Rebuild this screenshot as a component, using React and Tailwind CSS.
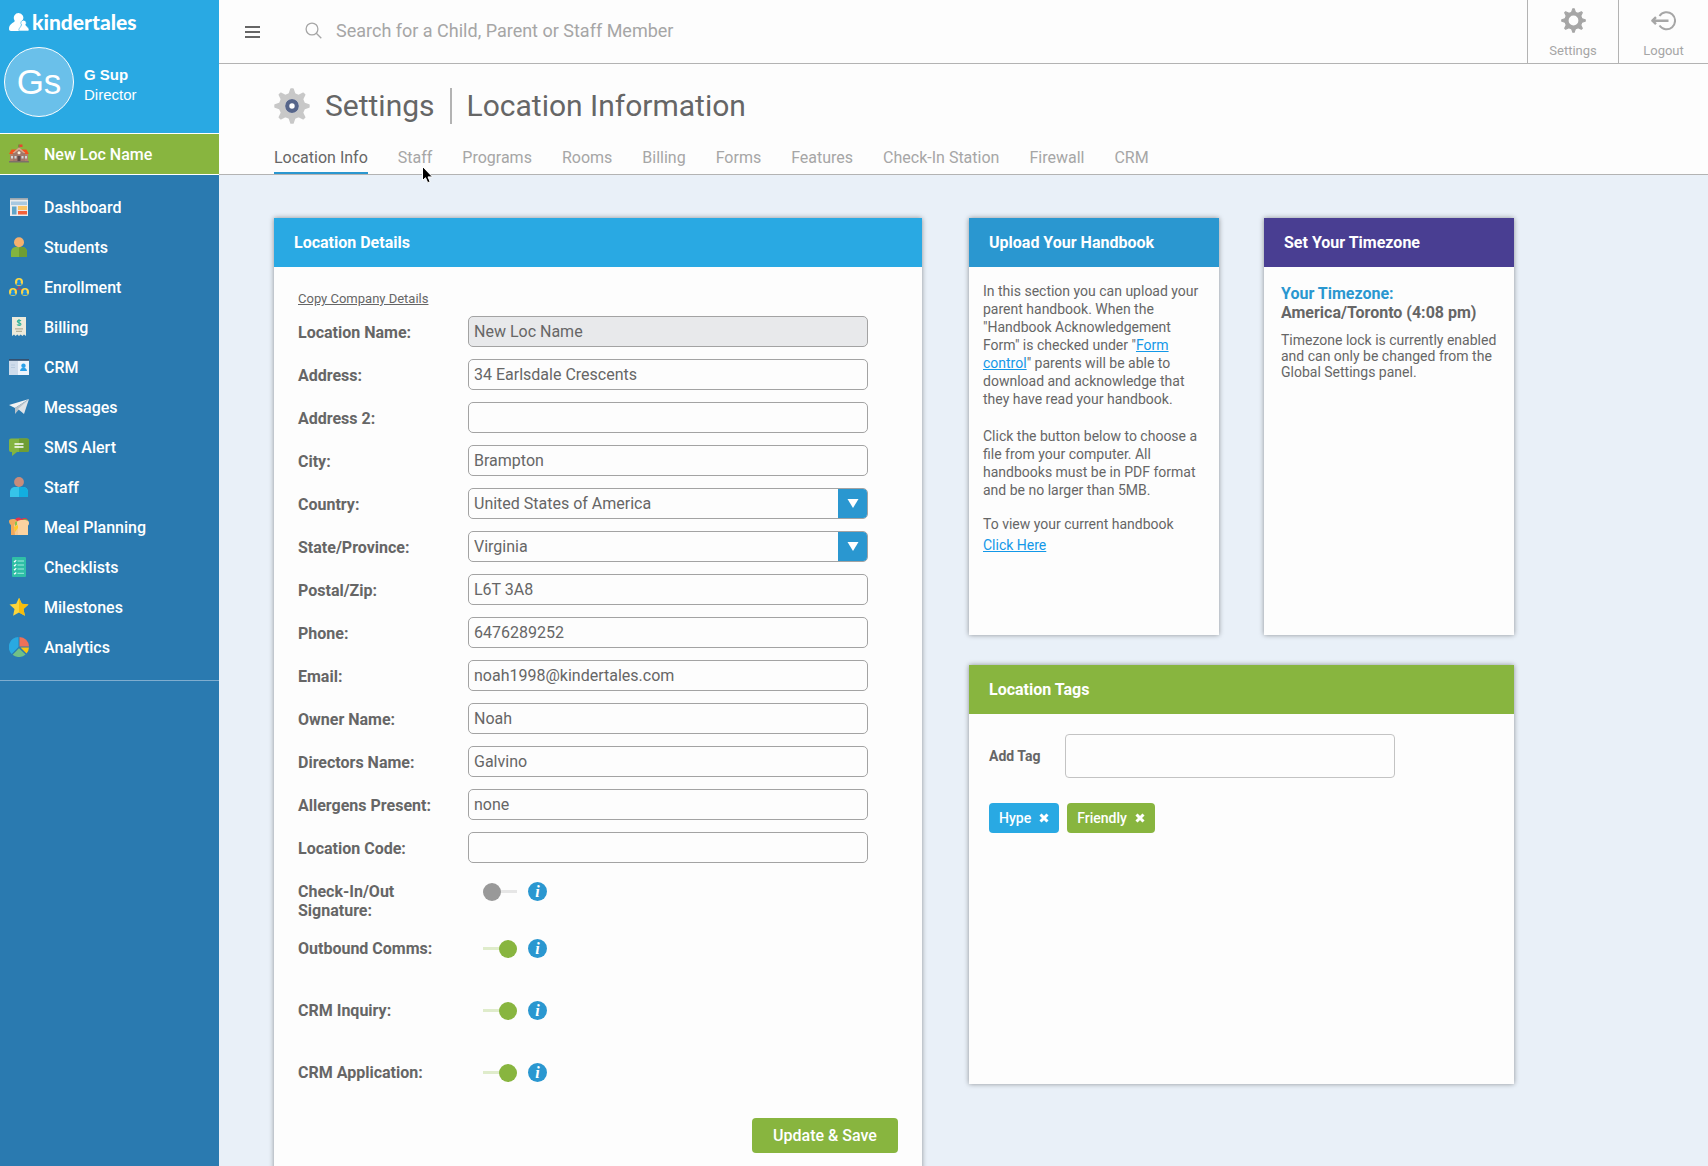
import React, { useState } from 'react'

/* Sidebar icons, all on a 20x20 box */
const ICONS = {
  school: (
    <>
      <path d="M10 6V0.500" stroke="#7a5548" strokeWidth="1"/>
      <path d="M10.500 .5h3v2.500h-3z" fill="#e8452f"/>
      <path d="M1 9h18v8H1z" fill="#b0806c"/>
      <path d="M2.500 5.500h15L20 10H0z" fill="#f4511e"/>
      <path d="M10 3.500 16 9v8H4V9z" fill="#a1786a"/>
      <path d="M10 3.200 16.500 9h-2L10 5.400 5.500 9h-2z" fill="#d9a88c"/>
      <circle cx="10" cy="8.700" r="1.500" fill="#fff3e0"/>
      <path d="M8.500 12h3v5h-3z" fill="#5d4a48"/>
      <path d="M2 12h2v2.500H2zM5.500 12h2v2.500h-2zM12.500 12h2v2.500h-2zM16 12h2v2.500h-2z" fill="#cfd8dc"/>
      <path d="M0 17h20v1.500H0z" fill="#7d7169"/>
    </>
  ),
  dashboard: (
    <>
      <path d="M1 1h18v18H1z" fill="#ececec"/>
      <path d="M1 1h18v1.800H1z" fill="#9aa7b0"/>
      <path d="M2 4.500h16v3.500H2z" fill="#a8c8e0"/>
      <path d="M3 9.500h4.500V17.500H3z" fill="#5fa5c9"/>
      <path d="M9 9h9v4H9z" fill="#fbc566"/>
      <path d="M9 14h9v3.500H9z" fill="#f4623a"/>
    </>
  ),
  students: (
    <>
      <path d="M2 20v-4.500C2 11.500 4.500 10 7 10h6c2.500 0 5 1.500 5 5.500V20z" fill="#83b440"/>
      <path d="M10 10h3c2.500 0 5 1.500 5 5.500V20h-8z" fill="#6f9d33"/>
      <circle cx="10" cy="5.300" r="5" fill="#f5b06e"/>
    </>
  ),
  enrollment: (
    <>
      <path d="M10 8v3.500L5.500 14M10 11.500l4.500 2.500" stroke="#c0405a" strokeWidth="1.200" fill="none"/>
      {[[10, 5], [4, 15], [16, 15]].map(([x, y]) => (
        <g key={x}>
          <circle cx={x} cy={y} r="4" fill="#fdd744"/>
          <circle cx={x} cy={y - 0.8} r="1.700" fill="#1f8ddb"/>
          <path d={`M${x - 2.6} ${y + 3.2}c0-4.500 5.200-4.500 5.200 0z`} fill="#1f8ddb"/>
        </g>
      ))}
    </>
  ),
  billing: (
    <>
      <path d="M3 0h14v19l-2-1.500-1.600 1.500-1.700-1.500L10 19l-1.700-1.500L6.600 19 5 17.500 3 19z" fill="#eceadb"/>
      <path d="M12 4c-.5-.8-3.700-1-3.700.6C8.300 6 12 5.400 12 7.200c0 1.500-3.300 1.500-4 .3M10 2v7" stroke="#2fb39a" strokeWidth="1.100" fill="none"/>
      <path d="M6 11.800h8M7 14.300h6" stroke="#b5b39b" strokeWidth="1.300"/>
    </>
  ),
  crm: (
    <>
      <path d="M0 2h20v16H0z" fill="#cfdceb"/>
      <path d="M9 4h11v14H9z" fill="#eef4fb"/>
      <path d="M0 2h20v1.800H0z" fill="#34506f"/>
      <path d="M2 8h4M2 10.500h4" stroke="#b7cade" strokeWidth="1"/>
      <circle cx="14.500" cy="8.700" r="2.200" fill="#2aa0e8"/>
      <path d="M11 14c0-4.500 7-4.500 7 0z" fill="#2aa0e8"/>
    </>
  ),
  messages: (
    <>
      <path d="M0 8 20 2 6 11z" fill="#f2f2f2"/>
      <path d="M20 2 6 11v6l3-3.500z" fill="#b9c2c9"/>
      <path d="M20 2 9 12l6 5z" fill="#dfe4e8"/>
    </>
  ),
  sms: (
    <>
      <path d="M2 1.500h16a2 2 0 0 1 2 2V13a2 2 0 0 1-2 2H8l-5 4v-4H2a2 2 0 0 1-2-2V3.500a2 2 0 0 1 2-2z" fill="#83b440"/>
      <path d="M10 1.500h8a2 2 0 0 1 2 2V13a2 2 0 0 1-2 2h-8z" fill="#6f9d33"/>
      <path d="M5.500 7h9M5.500 10h9" stroke="#fff" strokeWidth="1.400"/>
    </>
  ),
  staff: (
    <>
      <path d="M1 20v-4.500C1 11.500 3.500 10 6 10h8c2.500 0 5 1.500 5 5.500V20z" fill="#36c4ea"/>
      <path d="M10 10h4c2.500 0 5 1.500 5 5.500V20h-9z" fill="#12aee0"/>
      <circle cx="10" cy="5" r="4.900" fill="#c98c7b"/>
    </>
  ),
  meal: (
    <>
      <path d="M6 3c1-3 5-3 6-1 3-2 7-1 7 2L8 17z" fill="#e5354b"/>
      <path d="M14 2.500c3-1 5 0 5 2l-6 1z" fill="#6fb344"/>
      <path d="M0 4c0-2.500 7-3 8 0v14H2V8C1 7.500 0 6 0 4z" fill="#f0a95e"/>
      <path d="M5 8l4-4v14H6z" fill="#f7c98f"/>
      <path d="M6 5l3-1v3l-3 2z" fill="#8bc34a"/>
      <path d="M5 10l4-2v3l-3 4z" fill="#ffca28"/>
      <path d="M8 6c0-3 3-3 6-3s6 0 6 3c0 1.500-.5 2.300-1 2.500V18H9V8.500C8.300 8 8 7 8 6z" fill="#fbd3a0"/>
    </>
  ),
  checklists: (
    <>
      <rect x="3" y="0" width="14" height="20" rx="1" fill="#2fbfa6"/>
      <path d="M8.500 4H15M8.500 8H15M8.500 12H15M8.500 16.300H15" stroke="#a5ebde" strokeWidth="1"/>
      <path d="M5 4l.8.8L7.200 3M5 8l.8.8L7.200 7M5 12l.8.8L7.200 11M5 16.300l.8.700L7.200 15.500" stroke="#fff" strokeWidth="1.100" fill="none"/>
    </>
  ),
  milestones: (
    <>
      <path d="m10 .8 2.800 6 6.700.8-5 4.500 1.400 6.700L10 15.500l-5.900 3.300 1.400-6.700-5-4.500 6.700-.8z" fill="#fcd53b"/>
      <path d="m10 .8 2.800 6 6.700.8-5 4.500 1.400 6.700L10 15.500z" fill="#f8bd0b"/>
    </>
  ),
  analytics: (
    <>
      <path d="M9.500 10V0A10 10 0 0 0 2.700 17z" fill="#29a9e1"/>
      <path d="M10.500 9.500V0A9.700 9.700 0 0 1 20 9.500z" fill="#ef7058"/>
      <path d="M11.500 10.500H20a10 10 0 0 1-2.500 6z" fill="#fcc60e"/>
      <path d="m10 11.200 6.600 6.300a10 10 0 0 1-13 .3z" fill="#71c186"/>
    </>
  ),
}

const NAV = [
  { label: 'Dashboard', icon: 'dashboard' },
  { label: 'Students', icon: 'students' },
  { label: 'Enrollment', icon: 'enrollment' },
  { label: 'Billing', icon: 'billing' },
  { label: 'CRM', icon: 'crm' },
  { label: 'Messages', icon: 'messages' },
  { label: 'SMS Alert', icon: 'sms' },
  { label: 'Staff', icon: 'staff' },
  { label: 'Meal Planning', icon: 'meal' },
  { label: 'Checklists', icon: 'checklists' },
  { label: 'Milestones', icon: 'milestones' },
  { label: 'Analytics', icon: 'analytics' },
]

const TABS = ['Location Info', 'Staff', 'Programs', 'Rooms', 'Billing', 'Forms', 'Features', 'Check-In Station', 'Firewall', 'CRM']

const FIELDS = [
  { id: 'name', label: 'Location Name:', value: 'New Loc Name', locked: true },
  { id: 'address', label: 'Address:', value: '34 Earlsdale Crescents' },
  { id: 'address2', label: 'Address 2:', value: '' },
  { id: 'city', label: 'City:', value: 'Brampton' },
  { id: 'country', label: 'Country:', value: 'United States of America', select: true },
  { id: 'state', label: 'State/Province:', value: 'Virginia', select: true },
  { id: 'postal', label: 'Postal/Zip:', value: 'L6T 3A8' },
  { id: 'phone', label: 'Phone:', value: '6476289252' },
  { id: 'email', label: 'Email:', value: 'noah1998@kindertales.com' },
  { id: 'owner', label: 'Owner Name:', value: 'Noah' },
  { id: 'director', label: 'Directors Name:', value: 'Galvino' },
  { id: 'allergens', label: 'Allergens Present:', value: 'none' },
  { id: 'code', label: 'Location Code:', value: '' },
]

const TOGGLES = [
  { id: 'signature', label: 'Check-In/Out Signature:', on: false },
  { id: 'comms', label: 'Outbound Comms:', on: true },
  { id: 'inquiry', label: 'CRM Inquiry:', on: true },
  { id: 'application', label: 'CRM Application:', on: true },
]

const TEETH = [0, 45, 90, 135, 180, 225, 270, 315]

function Gear({ color, hub, className }) {
  return (
    <svg viewBox="0 0 24 24" className={className} aria-hidden="true">
      <g fill={color} stroke={color} strokeLinejoin="round">
        {TEETH.map(a => <path key={a} d="M10 4.500 11.300.7h1.400L14 4.500z" transform={`rotate(${a} 12 12)`}/>)}
      </g>
      <circle cx="12" cy="12" r="6.700" fill="none" stroke={color} strokeWidth="4"/>
      {hub && <circle cx="12" cy="12" r="3.200" fill="#fff" stroke="#56658a" strokeWidth="2.800"/>}
    </svg>
  )
}

function NavIcon({ name }) {
  return <svg viewBox="0 0 20 20" className="w-5 h-5 shrink-0" aria-hidden="true">{ICONS[name]}</svg>
}

function Card({ title, color, className = '', children }) {
  return (
    <section className={`bg-[#fdfdfd] shadow-[0_0_5px_rgba(0,0,0,0.4)] ${className}`}>
      <h2 className={`h-[49px] px-5 flex items-center text-base font-bold text-white ${color}`}>{title}</h2>
      {children}
    </section>
  )
}

function Field({ id, label, value, locked, select }) {
  const box = 'w-full h-[31px] px-[5px] rounded-[5px] border border-[#a3a3a3] text-base text-[#666]'
  return (
    <div className="flex items-center">
      <label htmlFor={id} className="w-[170px] shrink-0 pt-0.5 font-bold">{label}</label>
      <div className="w-[400px] relative">
        {select ? (
          <>
            <select id={id} defaultValue={value} className={`${box} appearance-none bg-[#fdfdfd]`}>
              <option>{value}</option>
            </select>
            <span className="absolute right-px inset-y-px w-[29px] rounded-r bg-[#2a97d0] flex items-center justify-center pointer-events-none">
              <svg viewBox="0 0 12 10" className="w-3 h-2.5"><path d="M.5 0h11L6 9z" fill="#fff"/></svg>
            </span>
          </>
        ) : (
          <input id={id} type="text" defaultValue={value} readOnly={locked}
            className={`${box} ${locked ? 'bg-[#e8e9eb]' : 'bg-[#fdfdfd]'}`}/>
        )}
      </div>
    </div>
  )
}

function Toggle({ id, label, on }) {
  const [checked, setChecked] = useState(on)
  return (
    <div className="flex items-start min-h-[43px] first:min-h-0">
      <label htmlFor={id} className="w-[150px] mr-[35px] shrink-0 font-bold leading-[19px]">{label}</label>
      <span className="relative w-[34px] h-[19px] flex items-center">
        <span className={`w-full h-[3px] ${checked ? 'bg-[#dfeccb]' : 'bg-[#e6e6e6]'}`}/>
        <span className={`absolute top-px w-[18px] h-[18px] rounded-full ${checked ? 'right-0 bg-[#88b53f]' : 'left-0 bg-[#999]'}`}/>
        <input id={id} type="checkbox" checked={checked} onChange={e => setChecked(e.target.checked)}
          className="absolute inset-0 w-full h-full opacity-0 cursor-pointer"/>
      </span>
      <button type="button" title="More info"
        className="ml-[11px] w-[19px] h-[19px] rounded-full bg-[#2a97d0] text-white font-['Liberation_Serif',serif] italic font-bold text-base leading-[18px]">i</button>
    </div>
  )
}

function Tag({ label, color }) {
  return (
    <span className={`flex items-center gap-2 h-[30px] px-2.5 rounded ${color}`}>
      {label}
      <button title={`Remove ${label}`}>
        <svg viewBox="0 0 10 10" className="w-2.5 h-2.5"><path d="m1.500 1.500 7 7M8.500 1.500l-7 7" stroke="#fff" strokeWidth="3"/></svg>
      </button>
    </span>
  )
}

export default function App() {
  return (
    <div className="flex h-screen overflow-hidden bg-[#e9f0f8] font-[Roboto,sans-serif] text-base text-[#666]">

      {/* Sidebar */}
      <aside className="w-[219px] shrink-0 bg-[#2a7ab0] text-white">
        <div className="h-[133px] bg-[#29a9e3] pt-2.5">
          <a href="#" className="flex items-center h-6 pl-[9px]">
            <svg viewBox="0 0 20 18" className="w-5 h-[18px]" fill="#fff" aria-hidden="true">
              <path d="M9.500 0a4.800 4.800 0 0 1 4 7.500L12 12v6H2c-1.300 0-2-.7-2-2 0-4.500 3-5.500 5-7 1-.8.700-1.500.2-2.300A4.800 4.800 0 0 1 9.500 0z"/>
              <path d="M14.500 7.200a2.800 2.800 0 0 1 2.200 4.500c.5 2 3.300 2.300 3.300 5 0 .9-.4 1.300-1.200 1.300h-7.900c-.8 0-1.200-.5-1-1.400.4-2 2.200-2.600 2.500-4.900a2.800 2.800 0 0 1 2.100-4.500z" stroke="#29a9e3" strokeWidth=".6"/>
            </svg>
            <span className="ml-[3px] font-[Lato,sans-serif] font-black text-[21px] leading-6">kindertales</span>
          </a>
          <div className="flex items-center pl-1 mt-[13px] font-['Liberation_Sans',sans-serif]">
            <div className="w-[70px] h-[70px] rounded-full border border-white bg-[#6ac0ea] flex items-center justify-center text-[35px]">Gs</div>
            <div className="ml-2.5 pt-1.5 text-[15px] leading-5">
              <div className="font-bold">G Sup</div>
              <div>Director</div>
            </div>
          </div>
        </div>
        <a href="#" className="flex items-center gap-[15px] h-[42px] pl-[9px] border-y border-white bg-[#88b53f] font-medium">
          <NavIcon name="school"/><span className="pt-0.5">New Loc Name</span>
        </a>
        <nav className="pt-3 pb-[13px] border-b border-[#7fadcf]">
          {NAV.map(({ label, icon }) => (
            <a key={label} href="#" className="flex items-center gap-[15px] h-10 pl-[9px] font-medium">
              <NavIcon name={icon}/><span className="pt-0.5">{label}</span>
            </a>
          ))}
        </nav>
      </aside>

      <div className="flex-1 min-w-0 flex flex-col">
        {/* Top bar */}
        <header className="flex items-stretch h-16 shrink-0 bg-[#fdfdfd] border-b border-[#b3b3b3]">
          <button title="Menu" className="pl-[26px] flex items-center">
            <svg viewBox="0 0 15 12" className="w-[15px] h-3"><path d="M0 1h15M0 6h15M0 11h15" stroke="#666" strokeWidth="2"/></svg>
          </button>
          <label htmlFor="search" className="ml-[45px] mr-[14px] pb-0.5 flex items-center">
            <svg viewBox="0 0 17 17" className="w-[17px] h-[17px]" fill="none" stroke="#a6a6a6" strokeWidth="1.300" aria-label="Search">
              <circle cx="7" cy="7" r="5.900"/><path d="m11.300 11.300 5 5"/>
            </svg>
          </label>
          <input id="search" type="text" placeholder="Search for a Child, Parent or Staff Member"
            className="flex-1 pb-0.5 bg-transparent text-lg outline-none placeholder:text-[#a6a6a6]"/>
          <button className="w-[91px] border-l border-[#b3b3b3] flex flex-col items-center pt-2 text-[13px] leading-5 text-[#a6a6a6]">
            <Gear color="#a6a6a6" className="w-[25px] h-[25px] mb-2"/>
            Settings
          </button>
          <button className="w-[90px] border-l border-[#b3b3b3] flex flex-col items-center pt-2 text-[13px] leading-5 text-[#a6a6a6]">
            <svg viewBox="0 0 25 25" className="w-[25px] h-[25px] mb-2" fill="none" stroke="#a6a6a6" strokeWidth="2" strokeLinejoin="round">
              <path d="M8.500 8a8.500 8.500 0 1 1 0 9.500"/>
              <path d="M1.500 12.700H17.500M5 9.200l-3.600 3.500L5 16.200" strokeWidth="2.400"/>
            </svg>
            Logout
          </button>
        </header>

        {/* Page title and tabs */}
        <div className="shrink-0 pl-[55px] bg-[#fdfdfd] border-b border-[#b3b3b3]">
          <div className="flex items-center pt-6">
            <Gear color="#c8c8c8" hub className="w-9 h-9"/>
            <h1 className="flex items-center ml-[15px] text-3xl leading-9">
              <span className="pr-[15px] border-r-2 border-[#b3b3b3]">Settings</span>
              <span className="pl-[15px]">Location Information</span>
            </h1>
          </div>
          <nav className="flex gap-[30px] mt-[21px]">
            {TABS.map((tab, i) => (
              <a key={tab} href="#" className={`relative h-[29px] pt-px border-b-2 ${i === 0 ? 'border-[#2a97d0]' : 'border-transparent text-[#a6a6a6]'}`}>
                {tab}
                {tab === 'Staff' && (
                  <svg viewBox="0 0 12 18" className="absolute left-6 top-5 w-3 h-[18px] z-10" aria-hidden="true">
                    <path d="M.5 1.500v14l3-2.800 2.200 5 2.400-1-2.100-4.800h4.500z" fill="#000" stroke="#fff" strokeWidth="1"/>
                  </svg>
                )}
              </a>
            ))}
          </nav>
        </div>

        {/* Page content */}
        <main className="flex-1 overflow-y-auto [scrollbar-width:none] pl-[55px] pt-[43px] pb-10">
          <div className="max-w-[1240px] grid grid-cols-[648fr_545fr] gap-[47px] items-start">

            <Card title="Location Details" color="bg-[#29a9e3]">
              <form className="px-6 pt-[22px] pb-10" onSubmit={e => e.preventDefault()}>
                <a href="#" className="block w-fit mb-[7px] text-[13px] leading-5 underline">Copy Company Details</a>
                <div className="flex flex-col gap-3">
                  {FIELDS.map(f => <Field key={f.id} {...f}/>)}
                </div>
                <div className="flex flex-col gap-[19px] pt-[19px]">
                  {TOGGLES.map(t => <Toggle key={t.id} {...t}/>)}
                </div>
                <div className="flex justify-end mt-3">
                  <button type="submit" className="h-[35px] w-[146px] rounded bg-[#88b53f] text-white font-medium">Update &amp; Save</button>
                </div>
              </form>
            </Card>

            <div className="grid grid-cols-2 gap-x-[45px] gap-y-[30px]">
              <Card title="Upload Your Handbook" color="bg-[#2a97d0]" className="min-h-[417px]">
                <div className="px-3.5 pt-[15px] text-sm leading-[18px]">
                  <p>
                    In this section you can upload your parent handbook. When the "Handbook Acknowledgement Form" is checked under "<a href="#" className="text-[#1398e8] underline">Form control</a>" parents will be able to download and acknowledge that they have read your handbook.
                  </p>
                  <p className="mt-[19px]">
                    Click the button below to choose a file from your computer. All handbooks must be in PDF format and be no larger than 5MB.
                  </p>
                  <p className="mt-4">To view your current handbook</p>
                  <a href="#" className="block w-fit mt-[3px] text-[#1398e8] underline">Click Here</a>
                </div>
              </Card>

              <Card title="Set Your Timezone" color="bg-[#493e92]" className="min-h-[417px]">
                <div className="px-[17px] pt-[17px]">
                  <p className="font-bold leading-[19px] text-[#2a97d0]">Your Timezone:</p>
                  <p className="font-bold leading-[19px]">America/Toronto (4:08 pm)</p>
                  <p className="mt-2.5 text-sm leading-4">Timezone lock is currently enabled and can only be changed from the Global Settings panel.</p>
                </div>
              </Card>

              <Card title="Location Tags" color="bg-[#88b53f]" className="col-span-2 min-h-[419px]">
                <div className="px-5 pt-5">
                  <div className="flex items-center">
                    <label htmlFor="tag" className="w-[76px] text-sm font-bold">Add Tag</label>
                    <input id="tag" type="text" className="w-[330px] h-11 px-2 rounded border border-[#c3c3c3] bg-[#fdfdfd]"/>
                  </div>
                  <div className="flex gap-2 mt-[25px] text-sm font-medium text-white">
                    <Tag label="Hype" color="bg-[#29a9e3]"/>
                    <Tag label="Friendly" color="bg-[#88b53f]"/>
                  </div>
                </div>
              </Card>
            </div>

          </div>
        </main>
      </div>
    </div>
  )
}
